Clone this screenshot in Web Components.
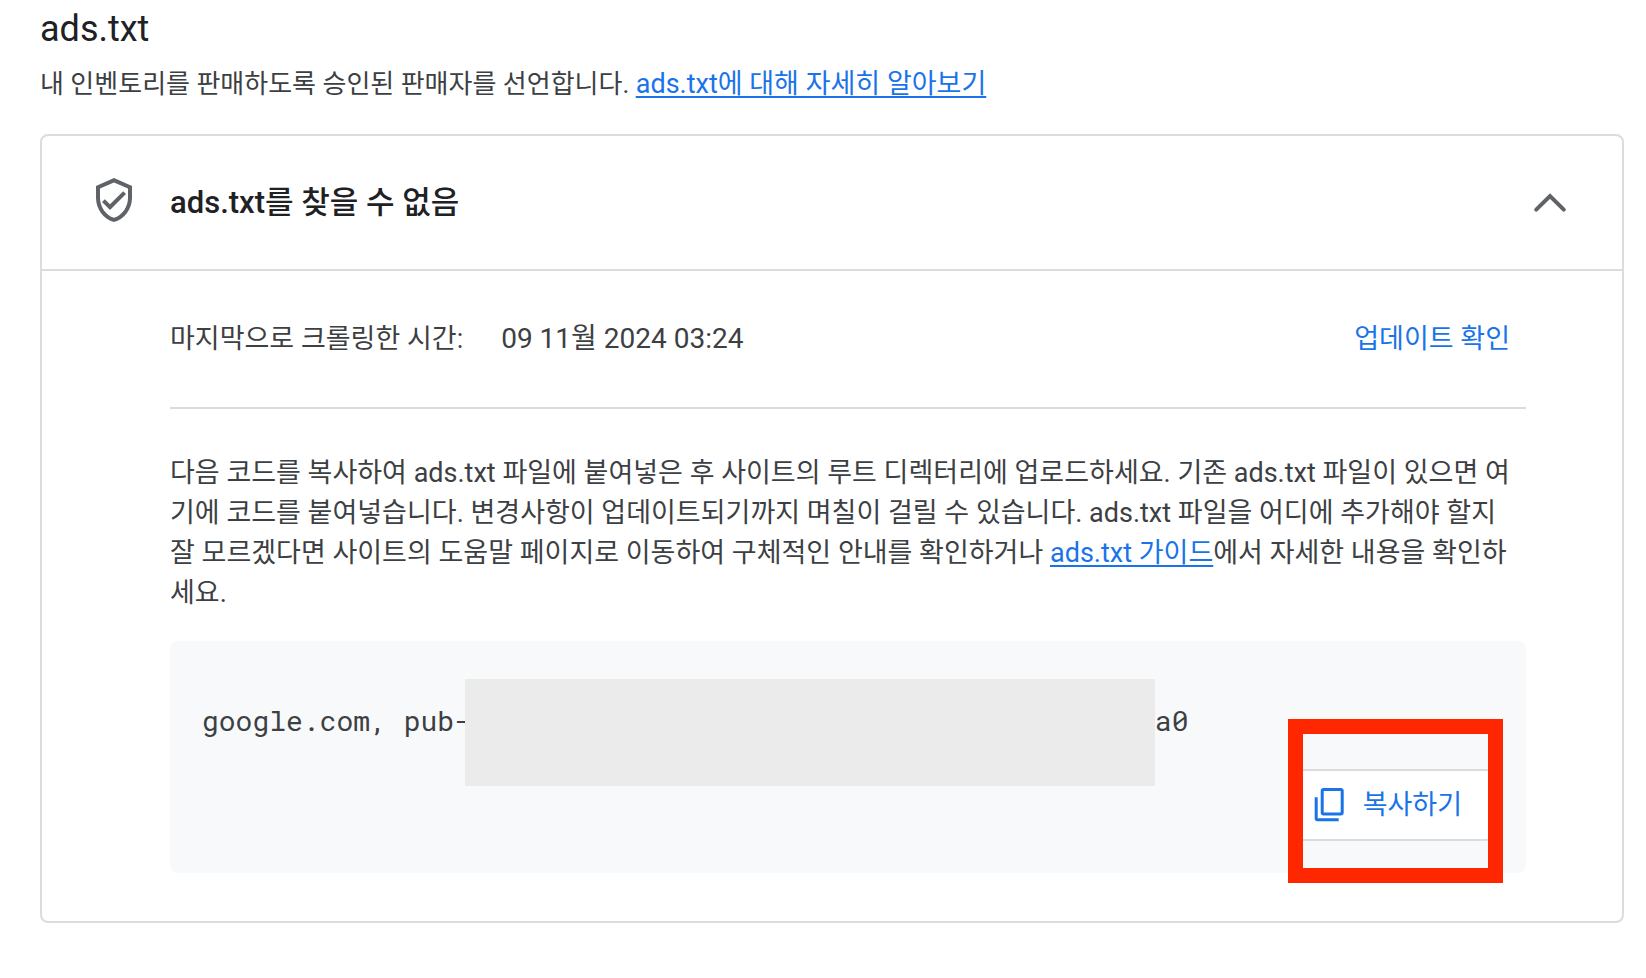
<!DOCTYPE html>
<html lang="ko">
<head>
<meta charset="utf-8">
<title>ads.txt</title>
<style>
    body{
        margin: 0;
        background: #fff;
        color: #3c4043;
        font-family: Roboto, "Noto Sans CJK KR", sans-serif;
        font-size: 27px;
        line-height: 40px;
    }
    a{
        color: #1a73e8;
        font-size: 27px;
        text-decoration-thickness: 2px;
        text-underline-offset: 3px;
        text-decoration-skip-ink: none;
    }
</style>
</head>
<body>
    <ads-page>
        <span slot="titulo">ads.txt</span>
        <span slot="intro">내 인벤토리를 판매하도록 승인된 판매자를 선언합니다. <a href="#info">ads.txt에 대해 자세히 알아보기</a></span>

        <status-card>
            <span slot="titulo">ads.txt를 찾을 수 없음</span>
            <crawl-row>
                <span slot="label">마지막으로 크롤링한 시간:</span>
                <span slot="fecha">09 11월 2024 03:24</span>
                업데이트 확인
            </crawl-row>
            <help-text>다음 코드를 복사하여 ads.txt 파일에 붙여넣은 후 사이트의 루트 디렉터리에 업로드하세요. 기존 ads.txt 파일이 있으면 여기에 코드를 붙여넣습니다. 변경사항이 업데이트되기까지 며칠이 걸릴 수 있습니다. ads.txt 파일을 어디에 추가해야 할지 잘 모르겠다면 사이트의 도움말 페이지로 이동하여 구체적인 안내를 확인하거나 <a href="#guide">ads.txt 가이드</a>에서 자세한 내용을 확인하세요.</help-text>
            <code-box>
                <span slot="inicio">google.com, pub-</span>
                <span slot="final">a0</span>
                <copy-button>복사하기</copy-button>
            </code-box>
        </status-card>
    </ads-page>

<script>
    class AdsPage extends HTMLElement{
        constructor(){
            super();
            this.attachShadow({mode:'open'});
            this.shadowRoot.innerHTML = `
                <style>
                    :host{
                        display: block;
                        padding: 6px 22px 48px 40px;
                    }
                    h1{
                        margin: 0 0 12px;
                        color: #202124;
                        font-size: 36px;
                        font-weight: 400;
                        line-height: 46px;
                    }
                    p{
                        margin: 0 0 30px;
                        font-size: 26px;
                    }
                </style>

                <h1><slot name="titulo"></slot></h1>
                <p><slot name="intro"></slot></p>
                <slot></slot>
            `;
        }
    }

    customElements.define('ads-page',AdsPage);

    class StatusCard extends HTMLElement{
        constructor(){
            super();
            this.attachShadow({mode:'open'});
            this.shadowRoot.innerHTML = `
                <style>
                    :host{
                        display: block;
                        border: 2px solid #dadce0;
                        border-radius: 8px;
                    }
                    header{
                        display: flex;
                        align-items: flex-start;
                        gap: 32px;
                        padding: 40px 48px;
                        border-bottom: 2px solid #dadce0;
                    }
                    h2{
                        flex: 1;
                        margin: 0;
                        color: #202124;
                        font-size: 31px;
                        font-weight: 500;
                        line-height: 53px;
                    }
                    svg{
                        display: block;
                        width: 48px;
                        height: 48px;
                    }
                    button{
                        padding: 0;
                        border: 0;
                        background: none;
                        cursor: pointer;
                    }
                    section{
                        padding: 0 96px 48px 128px;
                    }
                </style>

                <header>
                    <svg viewBox="0 0 24 24" fill="#5f6368" aria-hidden="true">
                        <path d="M12 1L3 5v6c0 5.55 3.84 10.74 9 12 5.16-1.26 9-6.45 9-12V5l-9-4zm7 10c0 4.52-2.98 8.69-7 9.93-4.02-1.24-7-5.41-7-9.93V6.3l7-3.11 7 3.11V11zm-11.59.59L6 13l4 4 8-8-1.41-1.42L10 14.17z"/>
                    </svg>
                    <h2><slot name="titulo"></slot></h2>
                    <button type="button" aria-label="접기" aria-expanded="true">
                        <svg viewBox="0 0 48 48" fill="none" stroke="#5f6368" stroke-width="4" stroke-linecap="round">
                            <path d="M10.2 33.7L24 20L37.8 33.7"/>
                        </svg>
                    </button>
                </header>
                <section><slot></slot></section>
            `;
        }
        connectedCallback(){
            let boton = this.shadowRoot.querySelector("button");
            let cuerpo = this.shadowRoot.querySelector("section");
            boton.addEventListener("click",function(){
                cuerpo.hidden = !cuerpo.hidden;
                boton.setAttribute("aria-expanded", String(!cuerpo.hidden));
            })
        }
    }

    customElements.define('status-card',StatusCard);

    class CrawlRow extends HTMLElement{
        constructor(){
            super();
            this.attachShadow({mode:'open'});
            this.shadowRoot.innerHTML = `
                <style>
                    :host{
                        display: flex;
                        align-items: baseline;
                        gap: 38px;
                        padding: 48px 0;
                        border-bottom: 2px solid #dadce0;
                    }
                    .fecha{
                        flex: 1;
                        font-size: 28px;
                    }
                    button{
                        padding: 0 16px;
                        border: 0;
                        background: none;
                        color: #1a73e8;
                        font: inherit;
                        cursor: pointer;
                    }
                </style>

                <slot name="label"></slot>
                <div class="fecha"><slot name="fecha"></slot></div>
                <button type="button"><slot></slot></button>
            `;
        }
    }

    customElements.define('crawl-row',CrawlRow);

    class HelpText extends HTMLElement{
        constructor(){
            super();
            this.attachShadow({mode:'open'});
            this.shadowRoot.innerHTML = `
                <style>
                    :host{
                        display: block;
                    }
                    p{
                        margin: 44px 0 28px;
                    }
                </style>

                <p><slot></slot></p>
            `;
        }
    }

    customElements.define('help-text',HelpText);

    class CodeBox extends HTMLElement{
        constructor(){
            super();
            this.attachShadow({mode:'open'});
            this.shadowRoot.innerHTML = `
                <style>
                    :host{
                        display: flex;
                        flex-direction: column;
                        position: relative;
                        padding: 38px 32px 32px;
                        border-radius: 8px;
                        background: #f8f9fb;
                    }
                    .codigo{
                        display: flex;
                        height: 90px;
                        font-family: "Roboto Mono", "Liberation Mono", monospace;
                        font-size: 28px;
                        line-height: 84px;
                        white-space: pre;
                    }
                    /* tapa el identificador del editor */
                    .tapado{
                        flex: 0 1 690px;
                        height: 107px;
                        margin-left: -6px;
                        background: #ebebeb;
                        z-index: 1;
                    }
                    .acciones{
                        display: flex;
                        justify-content: flex-end;
                    }
                    .marco{
                        position: absolute;
                        top: 78px;
                        right: 23px;
                        bottom: -10px;
                        width: 185px;
                        border: 15px solid #ff2700;
                        pointer-events: none;
                    }
                </style>

                <div class="codigo"><slot name="inicio"></slot><div class="tapado"></div><slot name="final"></slot></div>
                <div class="acciones"><slot></slot></div>
                <div class="marco"></div>
            `;
        }
    }

    customElements.define('code-box',CodeBox);

    class CopyButton extends HTMLElement{
        constructor(){
            super();
            this.attachShadow({mode:'open'});
            this.shadowRoot.innerHTML = `
                <style>
                    :host{
                        display: block;
                    }
                    button{
                        display: flex;
                        align-items: center;
                        gap: 16px;
                        height: 72px;
                        padding: 0 30px 0 14px;
                        border: 2px solid #dadce0;
                        border-radius: 8px;
                        background: #fff;
                        color: #1a73e8;
                        font: inherit;
                        cursor: pointer;
                    }
                    svg{
                        width: 36px;
                        height: 36px;
                    }
                </style>

                <button type="button">
                    <svg viewBox="0 0 36 36" fill="none" stroke="#1a73e8" stroke-width="3" aria-hidden="true">
                        <rect x="11.2" y="2.5" width="20" height="24.5" rx="1.5"/>
                        <path d="M5.2 10.3V31.5Q5.2 32.8 6.5 32.8H27.7"/>
                    </svg>
                    <slot></slot>
                </button>
            `;
        }
    }

    customElements.define('copy-button',CopyButton);
</script>
</body>
</html>
